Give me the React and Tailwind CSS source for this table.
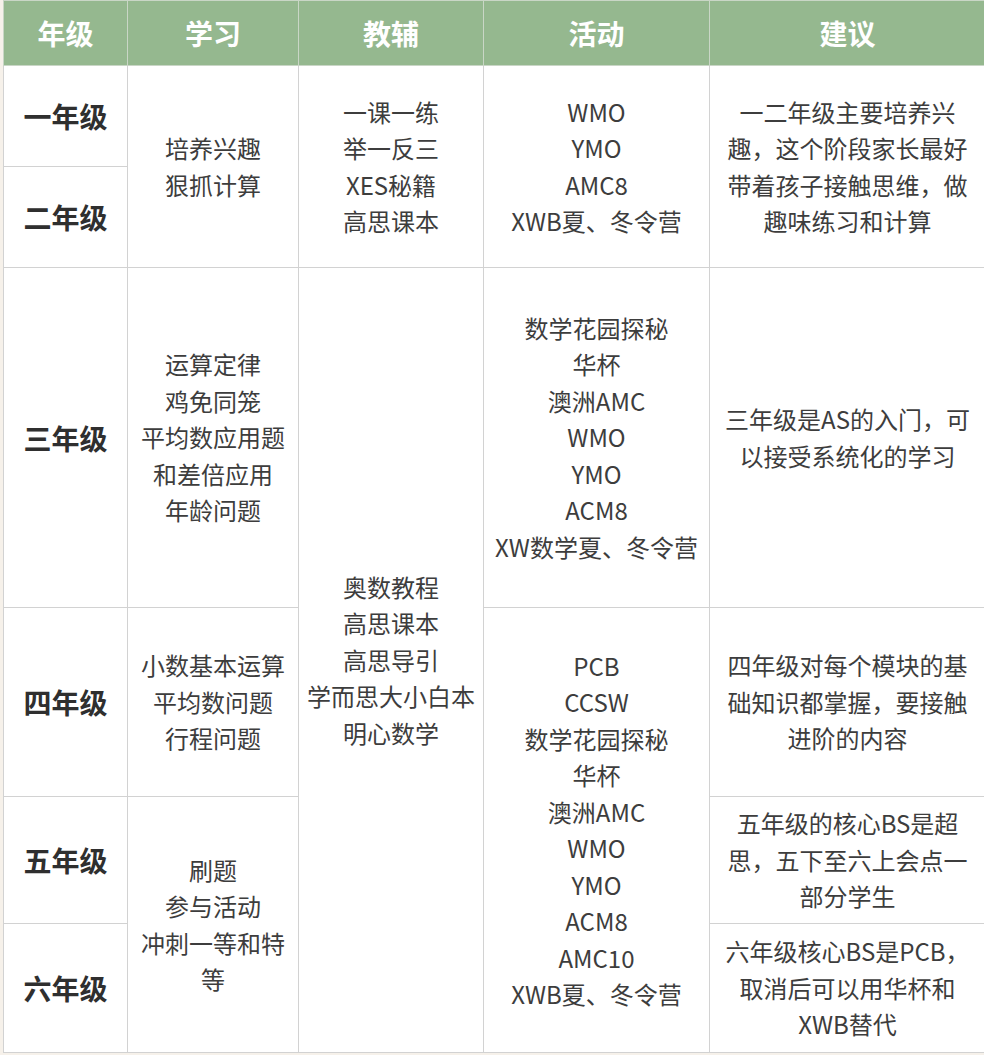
export default function App() {
    const head = ["年级", "学习", "教辅", "活动", "建议"];
    const td = "border border-[#d2d2d2] text-center align-middle px-2 text-[24px] leading-[36.5px] text-[#3d3d3d]";
    const grade = "border border-[#d2d2d2] text-center align-middle text-[28px] font-bold text-[#2f2f2f]";

    const lines = (arr) => arr.map((t, i) => <div key={i}>{t}</div>);

    return (
        <div
            className="w-[984px] h-[1055px] overflow-hidden bg-[#f6f1ea] pl-[3px]"
            style={{ fontFamily: '"Noto Sans CJK SC", "Noto Sans", sans-serif' }}
        >
            <table className="table-fixed border-collapse w-[982px] bg-white">
                <colgroup>
                    <col className="w-[124px]" />
                    <col className="w-[171px]" />
                    <col className="w-[185px]" />
                    <col className="w-[226px]" />
                    <col className="w-[276px]" />
                </colgroup>
                <thead>
                    <tr className="h-[65px] bg-[#95b88f]">
                        {head.map((h) => (
                            <th key={h} className="border border-[#c9d6c6] text-white text-[28px] font-bold text-center align-middle">
                                {h}
                            </th>
                        ))}
                    </tr>
                </thead>
                <tbody>
                    <tr className="h-[101px]">
                        <td className={grade}>一年级</td>
                        <td rowSpan={2} className={td}>{lines(["培养兴趣", "狠抓计算"])}</td>
                        <td rowSpan={2} className={td}>{lines(["一课一练", "举一反三", "XES秘籍", "高思课本"])}</td>
                        <td rowSpan={2} className={td}>{lines(["WMO", "YMO", "AMC8", "XWB夏、冬令营"])}</td>
                        <td rowSpan={2} className={td}>一二年级主要培养兴趣，这个阶段家长最好带着孩子接触思维，做趣味练习和计算</td>
                    </tr>
                    <tr className="h-[101px]">
                        <td className={grade}>二年级</td>
                    </tr>
                    <tr className="h-[340px]">
                        <td className={grade}>三年级</td>
                        <td className={td}>{lines(["运算定律", "鸡免同笼", "平均数应用题", "和差倍应用", "年龄问题"])}</td>
                        <td rowSpan={4} className={td}>{lines(["奥数教程", "高思课本", "高思导引", "学而思大小白本", "明心数学"])}</td>
                        <td className={td}>{lines(["数学花园探秘", "华杯", "澳洲AMC", "WMO", "YMO", "ACM8", "XW数学夏、冬令营"])}</td>
                        <td className={td}>三年级是AS的入门，可以接受系统化的学习</td>
                    </tr>
                    <tr className="h-[189px]">
                        <td className={grade}>四年级</td>
                        <td className={td}>{lines(["小数基本运算", "平均数问题", "行程问题"])}</td>
                        <td rowSpan={3} className={td}>{lines(["PCB", "CCSW", "数学花园探秘", "华杯", "澳洲AMC", "WMO", "YMO", "ACM8", "AMC10", "XWB夏、冬令营"])}</td>
                        <td className={td}>四年级对每个模块的基础知识都掌握，要接触进阶的内容</td>
                    </tr>
                    <tr className="h-[127px]">
                        <td className={grade}>五年级</td>
                        <td rowSpan={2} className={td}>{lines(["刷题", "参与活动", "冲刺一等和特等"])}</td>
                        <td className={td}>五年级的核心BS是超思，五下至六上会点一部分学生</td>
                    </tr>
                    <tr className="h-[129px]">
                        <td className={grade}>六年级</td>
                        <td className={td}>六年级核心BS是PCB，取消后可以用华杯和XWB替代</td>
                    </tr>
                </tbody>
            </table>
        </div>
    );
}
